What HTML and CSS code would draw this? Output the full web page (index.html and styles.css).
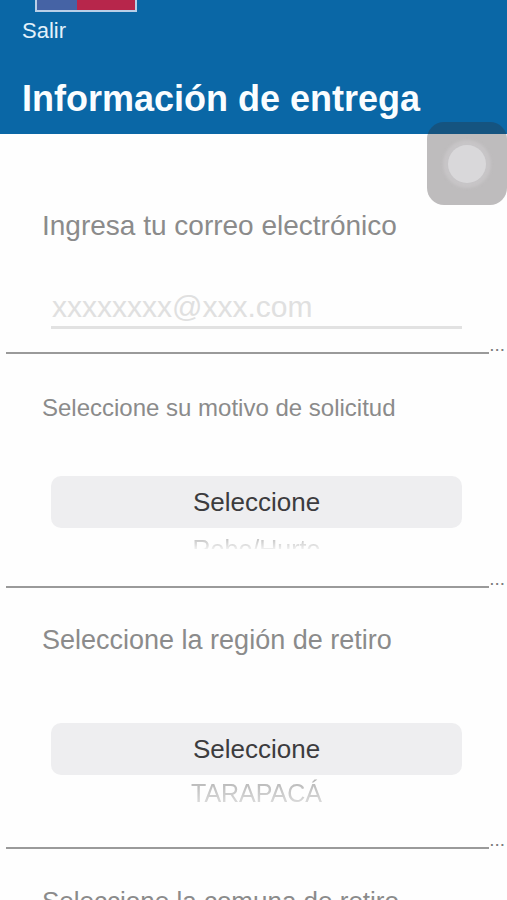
FILE: index.html
```html
<!DOCTYPE html>
<html lang="es">
<head>
<meta charset="utf-8">
<meta name="viewport" content="width=device-width, initial-scale=1">
<title>Información de entrega</title>
<link rel="stylesheet" href="styles.css">
</head>
<body>
<div class="screen">
  <header class="header">
    <div class="flag" aria-hidden="true"></div>
    <a class="exit" href="#">Salir</a>
    <h1 class="title">Información de entrega</h1>
  </header>
  <form class="form">
    <section class="group group-email">
      <label class="label label-large" for="email">Ingresa tu correo electrónico</label>
      <input class="email" id="email" type="email" placeholder="xxxxxxxx@xxx.com">
    </section>
    <div class="divider" aria-hidden="true"><span class="rule"></span><span class="dots">...</span></div>
    <section class="group group-reason">
      <label class="label label-small" for="reason">Seleccione su motivo de solicitud</label>
      <select class="picker" id="reason"><option>Seleccione</option><option>Robo/Hurto</option></select>
      <div class="next next-low" aria-hidden="true">Robo/Hurto</div>
    </section>
    <div class="divider" aria-hidden="true"><span class="rule"></span><span class="dots">...</span></div>
    <section class="group group-region">
      <label class="label" for="region">Seleccione la región de retiro</label>
      <select class="picker picker-far" id="region"><option>Seleccione</option><option>TARAPACÁ</option></select>
      <div class="next next-high" aria-hidden="true">TARAPACÁ</div>
    </section>
    <div class="divider" aria-hidden="true"><span class="rule"></span><span class="dots">...</span></div>
    <section class="group group-commune">
      <label class="label label-medium" for="commune">Seleccione la comuna de retiro</label>
      <select class="picker" id="commune"><option>Seleccione</option></select>
    </section>
  </form>
  <button class="assist" type="button" aria-label="AssistiveTouch"><span class="assist-dot"></span></button>
</div>
</body>
</html>
```
FILE: styles.css
```css
* { box-sizing: border-box; }

body {
  margin: 0;
  background: #fefefe;
  font-family: "Liberation Sans", Arial, sans-serif;
}

.screen {
  position: relative;
  height: 100vh;
  overflow: hidden;
}

.header {
  display: flex;
  flex-direction: column;
  align-items: flex-start;
  padding: 0 22px 13px;
  background: #0a67a6;
  color: #fafdff;
}

.flag {
  width: 102px;
  height: 12px;
  margin-left: 13px;
  border: 2px solid #b9cfe8;
  border-top: 0;
  background: linear-gradient(90deg, #4563a5 41%, #b7264b 41%);
}

.exit {
  margin-top: 4px;
  color: #e3f1fb;
  font-size: 22px;
  line-height: 30px;
  text-decoration: none;
}

.title {
  margin: 31px 0 0;
  font-size: 36px;
  line-height: 44px;
  font-weight: 700;
  white-space: nowrap;
}

.group {
  display: flex;
  flex-direction: column;
  padding: 0 45px 0 51px;
}

.label {
  margin-left: -9px;
  color: #8b8b8b;
  font-size: 27px;
  line-height: 36px;
  white-space: nowrap;
}

.label-large { font-size: 28px; }
.label-medium { font-size: 26px; }
.label-small { font-size: 24px; }

.group-email { padding-top: 74px; }
.group-reason { padding-top: 36px; }
.group-region { padding-top: 34px; }
.group-commune { padding-top: 34px; }

.email {
  width: 100%;
  height: 45px;
  margin: 40px 0 15px;
  padding: 3px 1px 0;
  border: 0;
  border-bottom: 3px solid #e2e2e2;
  border-radius: 0;
  background: transparent;
  color: #3c3c3e;
  font: inherit;
  font-size: 30px;
  outline: 0;
}

.email::placeholder { color: #e0e0e0; opacity: 1; }

.divider {
  display: flex;
  align-items: flex-end;
  height: 10px;
  padding: 0 2px 0 6px;
}

.rule {
  flex: 1;
  height: 2px;
  background: #9a9a9a;
}

.dots {
  color: #7c7c7c;
  font-size: 19px;
  line-height: 18px;
}

.picker {
  width: 100%;
  height: 52px;
  margin-top: 50px;
  padding: 0;
  appearance: none;
  border: 0;
  border-radius: 10px;
  background: #eeeef0;
  color: #3c3c3e;
  font: inherit;
  font-size: 26px;
  text-align: center;
  text-align-last: center;
}

.picker-far { margin-top: 65px; }

.next {
  overflow: hidden;
  color: #b4b4b4;
  font-size: 25px;
  line-height: 28px;
  text-align: center;
}

.next-low {
  height: 14px;
  margin: 7px 0 29px;
  mask-image: linear-gradient(#000, #0003);
}

.next-high {
  height: 28px;
  margin: 4px 0 32px;
  mask-image: linear-gradient(#000, #0006);
}

.assist {
  position: absolute;
  top: 122px;
  right: 0;
  display: grid;
  place-items: center;
  width: 80px;
  height: 83px;
  padding: 0;
  border: 0;
  border-radius: 17px;
  background: rgba(47, 42, 45, 0.31);
}

.assist-dot {
  width: 38px;
  height: 38px;
  border-radius: 50%;
  background: #d9d8da;
  box-shadow: 0 0 3px 5px rgba(217, 216, 218, 0.35);
}
```
